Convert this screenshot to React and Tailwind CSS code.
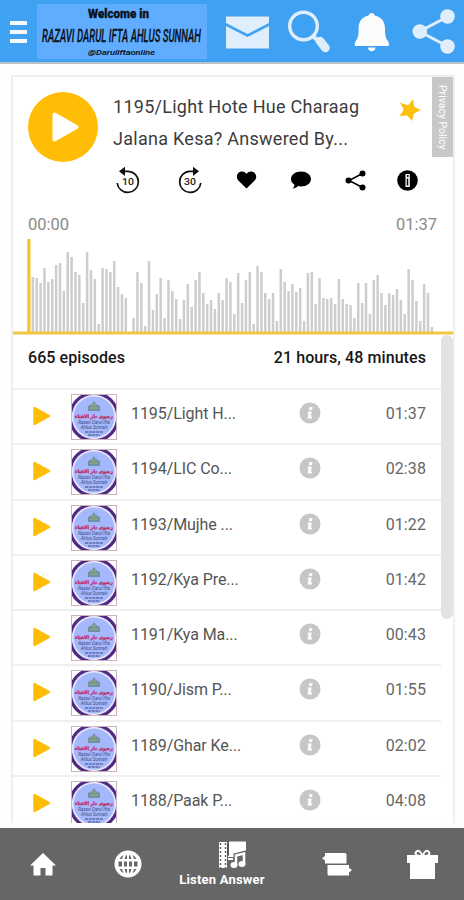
const episodes = [
  { title: '1195/Light H...', time: '01:37' },
  { title: '1194/LIC Co...', time: '02:38' },
  { title: '1193/Mujhe ...', time: '01:22' },
  { title: '1192/Kya Pre...', time: '01:42' },
  { title: '1191/Kya Ma...', time: '00:43' },
  { title: '1190/Jism P...', time: '01:55' },
  { title: '1189/Ghar Ke...', time: '02:02' },
  { title: '1188/Paak P...', time: '04:08' },
];

const peaks = [
  55, 54, 49, 64, 50, 53, 67, 69, 41, 80, 75, 60, 57, 29, 80, 62, 53, 8, 64, 63, 60, 71, 45, 38, 34, 0,
  14, 60, 49, 6, 71, 22, 38, 54, 14, 52, 41, 33, 13, 32, 48, 25, 52, 60, 39, 28, 32, 23, 39, 32, 54, 50,
  18, 59, 29, 52, 60, 8, 66, 60, 39, 33, 39, 11, 63, 50, 41, 48, 40, 44, 11, 59, 60, 28, 54, 34, 33, 34,
  28, 53, 33, 28, 27, 14, 49, 29, 49, 18, 52, 57, 39, 27, 39, 37, 43, 32, 18, 63, 52, 31, 11, 48, 39, 5,
];

function Banner() {
  return (
    <svg className="ml-[10px] h-[55px] w-[170px] shrink-0 bg-[#60adff]" viewBox="0 0 170 55">
      <g fill="#0b1220" stroke="#0b1220" fontFamily="Roboto, sans-serif">
        <text x="51" y="14" fontSize="12" fontWeight="900" strokeWidth="0.3" textLength="61" lengthAdjust="spacingAndGlyphs">Welcome in</text>
        <text x="5" y="37.5" fontSize="19" fontWeight="500" fontStyle="italic" strokeWidth="0.3" textLength="159" lengthAdjust="spacingAndGlyphs">RAZAVI DARUL IFTA AHLUS SUNNAH</text>
        <text x="51" y="51" fontSize="7.5" fontWeight="500" fontStyle="italic" strokeWidth="0.1" textLength="67" lengthAdjust="spacingAndGlyphs">@Daruliftaonline</text>
      </g>
    </svg>
  );
}

function Header() {
  return (
    <header className="flex h-[64px] shrink-0 items-center border-b-2 border-[#b9c0c6] bg-[#3fa1f2] pl-2.5">
      <div className="mt-[1px] flex w-[17px] shrink-0 flex-col gap-[5px]">
        <div className="h-1 bg-[#f2f9ff]" />
        <div className="h-1 bg-[#f2f9ff]" />
        <div className="h-1 bg-[#f2f9ff]" />
      </div>
      <Banner />
      <svg className="-ml-px h-[62px] w-[258px] shrink-0" viewBox="206 0 258 62">
        <g fill="#deeefc">
          <path d="M226 16.500H269V23L247.500 34 226 23Z" />
          <path d="M226 26L247.500 37 269 26V48.500H226Z" />
          <circle cx="303.500" cy="26" r="13.800" fill="none" stroke="#deeefc" strokeWidth="3.400" />
          <path d="M313 36L317 40" stroke="#deeefc" strokeWidth="4" />
          <path d="M320 41L325.500 48" stroke="#deeefc" strokeWidth="8.500" strokeLinecap="round" />
          <path d="M448 16.500L419.500 31.500L448 46.500" fill="none" stroke="#deeefc" strokeWidth="3" />
          <circle cx="447.500" cy="16.500" r="7.300" />
          <circle cx="419.800" cy="31.500" r="7.300" />
          <circle cx="447.500" cy="46.500" r="7.300" />
        </g>
        <path
          d="M368.500 15.500a3.200 3.200 0 0 1 6.200 0c7 1.500 10.300 6 10.300 13.500 0 7 .8 9.500 3.800 13.500v3.500h-34v-3.500c3-4 3.800-6.500 3.800-13.500 0-7.500 3-12 9.900-13.500zM368 47.500h7.500c0 5-7.500 5-7.500 0z"
          fill="#fafcfe"
        />
      </svg>
    </header>
  );
}

// Circular arrow with the number of seconds inside
function SkipIcon({ seconds, forward }) {
  return (
    <svg className="size-7" viewBox="0 0 28 28">
      <g transform={forward ? 'translate(28 0) scale(-1 1)' : undefined}>
        <path d="M8 5.300H14.500A10.600 10.600 0 1 1 3.200 17" fill="none" stroke="#111" strokeWidth="1.700" />
        <path d="M5 5.300L11 .7V9.900Z" fill="#111" />
      </g>
      <text x="14" y="19" fontSize="9.5" fontWeight="500" fill="#222" textAnchor="middle" textLength="12" lengthAdjust="spacingAndGlyphs" fontFamily="Roboto, sans-serif">
        {seconds}
      </text>
    </svg>
  );
}

function Actions() {
  return (
    <div className="flex h-7 items-center">
      <SkipIcon seconds="10" />
      <div className="ml-[34px] flex">
        <SkipIcon seconds="30" forward />
      </div>
      <svg className="ml-[32px] h-[18px] w-[21px]" viewBox="0 0 20 18">
        <path d="M10 17.500L1.600 9.200C-1 6.200.5 1 5 .6 7.500.400 9 1.800 10 3 11 1.800 12.500.400 15 .6 19.500 1 21 6.200 18.400 9.200Z" />
      </svg>
      <svg className="ml-[34px] h-[18px] w-[20px]" viewBox="0 0 20 18">
        <path d="M10 .5c5.700 0 10 3.200 10 7.500s-4.300 7.500-10 7.500c-1 0-2-.1-3-.4C5.600 16.500 4 17.500 1.500 17.600c1.300-1.200 1.900-2.400 2-3.800C1.200 12.300 0 10.300 0 8 0 3.700 4.300.5 10 .5z" />
      </svg>
      <svg className="ml-[34px] size-[21px]" viewBox="0 0 21 21">
        <path d="M17.500 3.500L4 10.500L17.500 17.500" fill="none" stroke="black" strokeWidth="1.500" />
        <circle cx="17.500" cy="3.500" r="3" />
        <circle cx="3.500" cy="10.500" r="3" />
        <circle cx="17.500" cy="17.500" r="3" />
      </svg>
      <svg className="ml-[31px] size-[21px]" viewBox="0 0 21 21">
        <circle cx="10.500" cy="10.500" r="10.300" />
        <path d="M8.500 4H12.800V17H8.500Z" fill="white" />
        <path d="M10.800 5V7M10.500 8.500V15.500" stroke="black" strokeWidth="1.500" />
      </svg>
    </div>
  );
}

function Player() {
  return (
    <section className="relative h-[148px] shrink-0">
      <div className="flex pt-[14px] pl-[15px]">
        <div className="mt-[1px] flex size-[70px] shrink-0 items-center justify-center rounded-full bg-[#ffbd06]">
          <svg className="ml-[5px] h-[30px] w-[27px]" viewBox="0 0 27 30">
            <path d="M2.500 2.500L24.500 15L2.500 27.500Z" fill="white" stroke="white" strokeWidth="4" strokeLinejoin="round" />
          </svg>
        </div>
        <div className="ml-[15px]">
          <h1 className="w-[290px] text-[18px] leading-[31.500px] tracking-[0.270px] whitespace-nowrap text-[#3c3c3c]">
            1195/Light Hote Hue Charaag
            <br />
            Jalana Kesa? Answered By...
          </h1>
          <div className="mt-[12px] ml-px">
            <Actions />
          </div>
        </div>
      </div>
      <svg className="absolute top-[22px] left-[386px] size-[23px]" viewBox="0 0 23 23">
        <path d="M14 0L15.300 8L22 11L15 14.500L13 22L8.200 16.500L.5 17L4.700 10.800L1 3.500L9 6.500Z" fill="#fdc10c" />
      </svg>
      <div className="absolute top-0 right-0 flex h-[80px] w-[21px] items-center justify-center bg-[#c8c8c8] text-[10.500px] text-white [writing-mode:vertical-rl]">
        Privacy Policy
      </div>
    </section>
  );
}

function Waveform() {
  return (
    <section className="flex h-[110px] shrink-0 flex-col">
      <div className="-mt-2.5 flex justify-between pr-4 pl-[15px] text-[16.500px] leading-5 text-[#8a8a8a]">
        <span>00:00</span>
        <span>01:37</span>
      </div>
      <svg className="mt-auto h-[97px] w-[440px] shrink-0" viewBox="13 238 440 97">
        {peaks.map((h, i) => (
          <rect key={i} x={31.600 + i * 3.874} y={332 - h} width="2.500" height={h} fill="#cdcdcd" />
        ))}
        <path d="M27.300 239H30.500V333H27.300Z" fill="#f0c52f" />
        <path d="M12 331.500H454V334.500H12Z" fill="#efc83f" />
      </svg>
    </section>
  );
}

function Thumb() {
  return (
    <svg className="size-[46px]" viewBox="0 0 46 46">
      <rect x="0.500" y="0.500" width="45" height="45" fill="#fff" />
      <circle cx="23" cy="23" r="25.500" fill="#4f2a80" />
      <rect x="0.500" y="0.500" width="45" height="45" fill="none" stroke="#cdb2be" />
      <circle cx="23" cy="23" r="22.300" fill="#e4e4fb" />
      <circle cx="23" cy="23" r="20.500" fill="#a5b8fb" />
      <path d="M17 17V12L21 10L23 7L25 10L29 12V17Z" fill="#6e94a4" />
      <path d="M19 14H27M21 11H25" stroke="#b3a75f" />
      <g textAnchor="middle">
        <text x="23" y="23.500" fontSize="4.600" fontWeight="700" fill="#c02a5c" stroke="#c02a5c" strokeWidth="0.300" fontFamily="DejaVu Sans, sans-serif">رضوی دار الافتاء</text>
        <text x="23" y="29.500" fontSize="4.500" fill="#414b82" fontFamily="Roboto, sans-serif" fontStyle="italic">Razavi Darul Ifta</text>
        <text x="23" y="35" fontSize="4.500" fill="#414b82" fontFamily="Roboto, sans-serif" fontStyle="italic">Ahlus Sunnah</text>
      </g>
      <path d="M14 38H32M17 41H29" stroke="#3b427e" strokeWidth="1.200" strokeDasharray="3 0.700" />
    </svg>
  );
}

function EpisodeRow({ title, time }) {
  return (
    <li className="flex h-[55.300px] shrink-0 items-start border-t-2 border-[#efefef] pt-[4px] pl-[20px]">
      <svg className="mt-[12px] h-[20px] w-[18px]" viewBox="0 0 18 20">
        <path d="M1.500 2L16 10L1.500 18Z" fill="#ffbd06" stroke="#ffbd06" strokeWidth="2.500" strokeLinejoin="round" />
      </svg>
      <div className="ml-5">
        <Thumb />
      </div>
      <span className="mt-[10px] ml-[14px] w-[168px] text-[16px] leading-5 tracking-[-0.080px] whitespace-nowrap text-[#555]">{title}</span>
      <svg className="mt-[8px] size-[22px]" viewBox="0 0 22 22">
        <circle cx="11" cy="11" r="10.500" fill="#c6c6c6" />
        <path d="M10.500 5H13.500L13 8H10ZM9 9.500H12.800L11.800 14.500H13V16.500H8.500L9.500 11.500H8.500Z" fill="white" />
      </svg>
      <span className="mt-[10px] ml-auto pr-[15px] text-[16px] leading-5 tracking-[0.100px] text-[#666]">{time}</span>
    </li>
  );
}

function EpisodeList() {
  return (
    <section className="relative flex min-h-0 flex-1 flex-col overflow-hidden">
      <div className="flex h-[53px] shrink-0 items-start justify-between pt-[13px] pr-[27px] pl-[15px] text-[16px] leading-5 font-medium tracking-[0.080px] text-[#161616]">
        <span>665 episodes</span>
        <span>21 hours, 48 minutes</span>
      </div>
      <ul className="mr-3 flex flex-col">
        {episodes.map((e) => (
          <EpisodeRow key={e.title} {...e} />
        ))}
      </ul>
      <div className="absolute top-0 right-0 h-[284px] w-[12px] rounded-full bg-[#e3e3e3]" />
    </section>
  );
}

function Footer() {
  return (
    <footer className="flex h-[72px] shrink-0 items-center bg-[#666] text-white">
      <svg className="ml-[30px] h-[23px] w-[26px]" viewBox="0 0 26 23" fill="currentColor">
        <path d="M13 0L26 12.500H22.500V22.500H15.500V15H10.500V22.500H3.500V12.500H0Z" />
      </svg>
      <svg className="ml-[58px] size-[28px]" viewBox="0 0 28 28">
        <circle cx="14" cy="14" r="13.500" fill="white" />
        <g fill="#666">
          <path d="M4.500 11.500H8V16.500H4.500ZM10 11.500H13V16.500H10ZM15 11.500H18V16.500H15ZM20 11.500H23.500V16.500H20Z" />
          <path d="M13 4.500V9H10.500Q11 6 13 4.500ZM15 4.500Q17 6 17.500 9H15ZM9.500 5Q8.500 7 8 9H5.500Q7 6 9.500 5ZM18.500 5Q21 6 22.500 9H20Q19.500 7 18.500 5Z" />
          <path d="M13 23.500V19H10.500Q11 22 13 23.500ZM15 23.500Q17 22 17.500 19H15ZM9.500 23Q8.500 21 8 19H5.500Q7 22 9.500 23ZM18.500 23Q21 22 22.500 19H20Q19.500 21 18.500 23Z" />
        </g>
      </svg>
      <div className="ml-[36px] flex w-[88px] flex-col items-center">
        <svg className="ml-5 h-[29px] w-[29px]" viewBox="0 0 29 29">
          <path d="M1 1H9V27H1Z" fill="white" />
          <path d="M2.500 2V27M7.500 2V27" stroke="#666" strokeWidth="1.500" strokeDasharray="2 2" />
          <path d="M12 1.500H27V13H12Z" fill="white" stroke="white" strokeWidth="2" strokeLinejoin="round" />
          <path d="M10 15H16M10 18H15" stroke="white" strokeWidth="2" />
          <path d="M10 15V3" stroke="#444" strokeWidth="1" />
          <path d="M18 24V14.500L26 12.500V23" fill="none" stroke="#666" strokeWidth="5" />
          <path d="M18 24V14.500L26 12.500V23" fill="none" stroke="white" strokeWidth="2.500" />
          <ellipse cx="16" cy="24" rx="3.500" ry="3" fill="white" />
          <ellipse cx="24" cy="23" rx="3.500" ry="3" fill="white" />
        </svg>
        <span className="mt-[2px] text-[13px] leading-4 font-bold tracking-[0.200px] whitespace-nowrap">Listen Answer</span>
      </div>
      <svg className="ml-[56px] h-[25px] w-[30px]" viewBox="0 0 30 25" fill="currentColor">
        <path d="M3 1H23Q24.500 1 24.500 2.500V11.500H3V8.500L0 6.200L3 4ZM5.500 13H27V16L30 18L27 20.500V23.500H7Q5.500 23.500 5.500 22Z" />
      </svg>
      <svg className="ml-[55px] h-[31px] w-[31px]" viewBox="0 0 31 31" fill="currentColor">
        <path d="M0 6H31V14H28V30H3V14H0Z" />
        <path d="M15 7Q7 7 9 3Q12-1 15.500 7Q19-1 22 3Q24 7 16 7" fill="#666" stroke="white" strokeWidth="2" />
      </svg>
    </footer>
  );
}

export default function App() {
  return (
    <div className="flex h-[900px] w-[464px] flex-col overflow-hidden bg-[#fefefe] font-['Roboto',sans-serif]">
      <Header />
      <main className="mt-[11px] mr-[9px] mb-[5px] ml-[11px] flex min-h-0 flex-1 flex-col border-2 border-b-0 border-[#efefef] bg-white">
        <Player />
        <Waveform />
        <EpisodeList />
      </main>
      <Footer />
    </div>
  );
}
